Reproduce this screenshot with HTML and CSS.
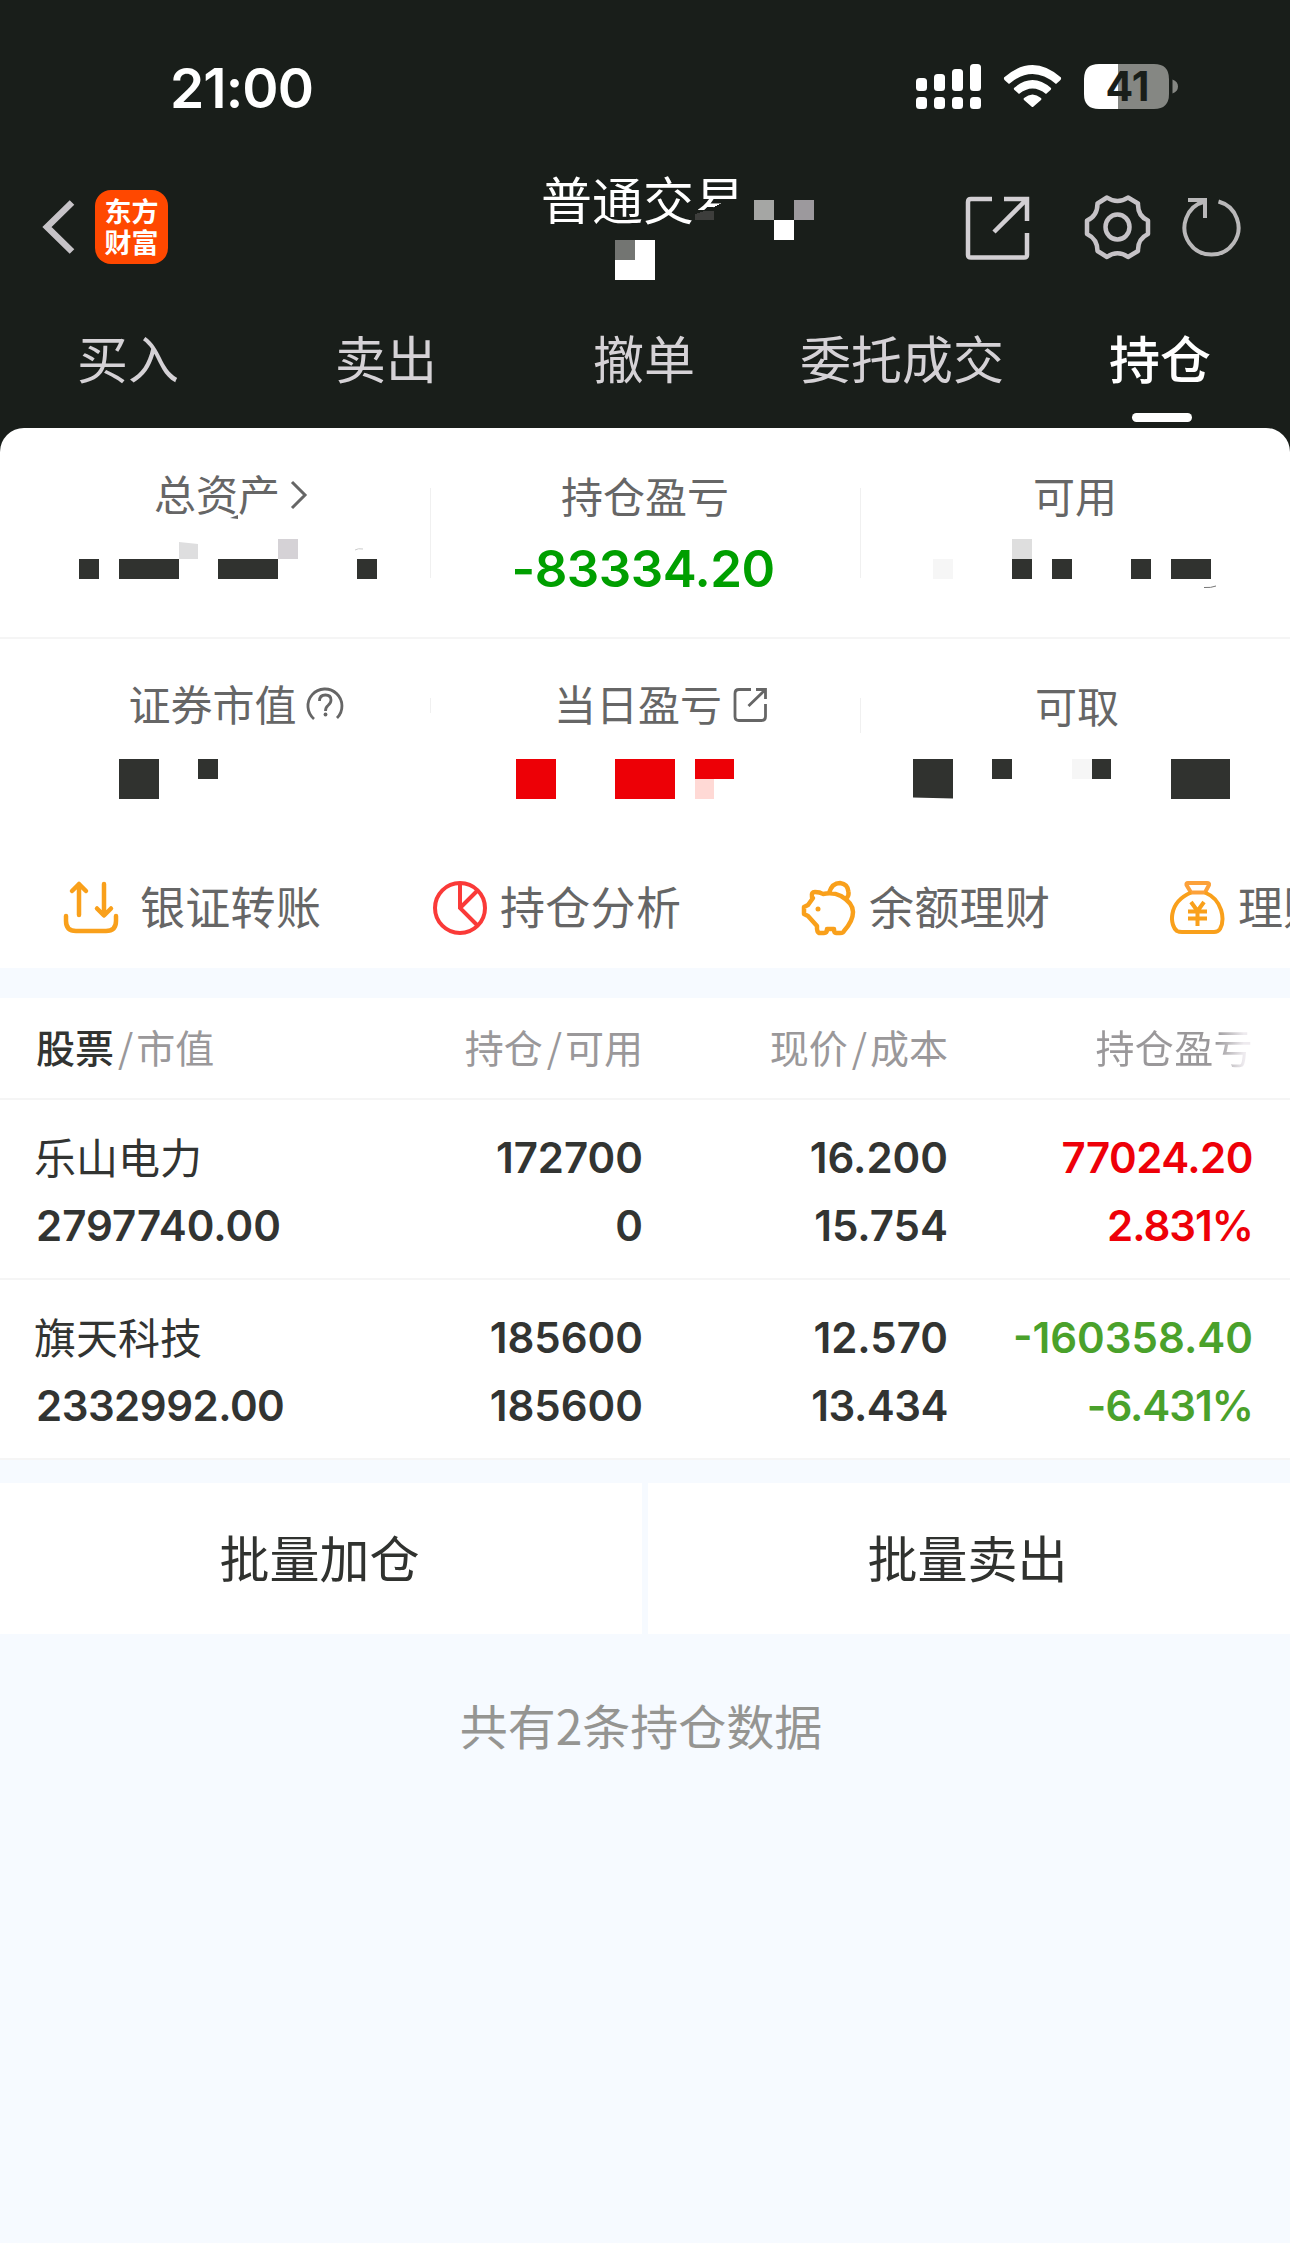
FILE: index.html
```html
<!DOCTYPE html>
<html lang="zh-CN">
<head>
<meta charset="utf-8">
<title>普通交易 - 持仓</title>
<link rel="stylesheet" href="styles.css">
</head>
<body>
<header class="top">
  <div class="status">
    <span class="clock">21:00</span>
    <svg class="status-icons" width="264" height="48" viewBox="915 62 264 48">
      <g fill="#fff">
        <rect x="916" y="78" width="11" height="13" rx="3.5"/><rect x="934" y="74" width="11" height="17" rx="3.5"/><rect x="952" y="69" width="11" height="22" rx="3.5"/><rect x="970" y="64" width="11" height="27" rx="3.5"/>
        <rect x="916" y="97" width="11" height="12" rx="3.5"/><rect x="934" y="97" width="11" height="12" rx="3.5"/><rect x="952" y="97" width="11" height="12" rx="3.5"/><rect x="970" y="97" width="11" height="12" rx="3.5"/>
        <path d="M1004 77.500Q1032.500 52.500 1061 77.500Q1061.500 79 1060 80.500L1056 84Q1032.500 64 1009 84L1005 80.500Q1003.500 79 1004 77.500Z"/>
        <path d="M1014 88Q1032.500 72 1051 88Q1051.500 89 1050.500 90L1046 94Q1032.500 83 1019 94L1014.500 90Q1013.500 89 1014 88Z"/>
        <path d="M1024 98Q1032.500 91 1041 98Q1042 99 1041 100L1033.500 106.500Q1032.500 107.500 1031.500 106.500L1024 100Q1023 99 1024 98Z"/>
      </g>
      <path d="M1118 64H1154Q1169 64 1169 79V94Q1169 109 1154 109H1118Z" fill="#858783"/>
      <path d="M1118 64H1099Q1084 64 1084 79V94Q1084 109 1099 109H1118Z" fill="#fff"/>
      <path d="M1172.500 79.500Q1178 81.500 1178 86.500T1172.500 93.500Z" fill="#858783"/>
      <text x="1127.500" y="101" text-anchor="middle" class="battery">41</text>
    </svg>
  </div>
  <div class="nav">
    <div class="nav-left">
      <svg width="34" height="56" viewBox="0 0 34 56"><path d="M30 3.500L5 28L30 52.500" fill="none" stroke="#c6c3c7" stroke-width="6.500" stroke-linecap="butt"/></svg>
      <div class="logo"><span>东方</span><span>财富</span></div>
    </div>
    <div class="title">
      <h1>普通交易</h1>
      <svg class="title-mask" width="300" height="110" viewBox="540 175 300 110" shape-rendering="crispEdges">
        <path d="M694 209L711 211L714 207L722 203L729 200H745V240H694Z" fill="#191e1a"/>
        <path d="M695 214L704 211H714V220H695Z" fill="#3d3e3c"/>
        <path d="M754 200h20v20h-20z" fill="#a5a6a4"/><path d="M794 200h20v20h-20z" fill="#9c999d"/>
        <path d="M774 220h20v20h-20zM635 240h20v40h-40v-20h20z" fill="#fff"/><path d="M615 240h20v20h-20z" fill="#737572"/>
      </svg>
    </div>
    <svg class="nav-icons" width="280" height="72" viewBox="964 191 280 72" fill="none">
      <g stroke="#d2cfd3" stroke-width="4.500"><path d="M992 199H971Q968 199 968 202V255Q968 257.500 971 257.500H1024Q1027 257.500 1027 255V233"/><path d="M1004 199H1027V221M1027 199L994 232"/></g>
      <g stroke="#c6c3c7" stroke-width="4.500" stroke-linejoin="round"><path d="M1107 197.500Q1117.500 204.500 1128 197.500L1138 203.500Q1137.500 216 1148 220.500V234Q1137.500 239 1138 251L1128 257Q1117.500 249.500 1107 257L1097.500 251Q1097.500 239 1087 234V220.500Q1097.500 216 1097.500 203.500Z"/><ellipse cx="1117.500" cy="227" rx="12" ry="12.500"/></g>
      <path d="M1188 200H1205V218M1218.500 201.500A27 27 0 1 1 1204.500 201.500" stroke="#b9b8b9" stroke-width="4"/>
    </svg>
  </div>
  <nav class="tabs">
    <a>买入</a><a>卖出</a><a>撤单</a><a>委托成交</a><a class="active">持仓</a>
  </nav>
</header>
<main>
  <section class="summary">
    <div class="cell raised">
      <div class="label link-label"><span>总资产</span><svg class="chev" width="20" height="34" viewBox="0 0 20 34"><path d="M3 4L16 17L3 30" fill="none" stroke="#666" stroke-width="3"/></svg></div>
      <svg class="mosaic" width="430" height="80" viewBox="0 515 430 80">
        <path d="M79 559h20v20H79zM119 559h60v20h-60zM218 559h60v20h-60zM357 559h20v20h-20z" fill="#30322f"/>
        <path d="M179 542L198 544V559H179z" fill="#dededf"/><path d="M278 539h20v20h-20z" fill="#d5d2d6"/>
        <path d="M230 518L238 515V519z" fill="#666"/><path d="M355 550Q358 548 363 549" stroke="#ccc" fill="none"/>
      </svg>
    </div>
    <div class="cell">
      <i class="rule"></i>
      <div class="label">持仓盈亏</div>
      <div class="value green">-83334.20</div>
    </div>
    <div class="cell">
      <i class="rule"></i>
      <div class="label">可用</div>
      <svg class="mosaic" width="430" height="80" viewBox="860 515 430 80">
        <path d="M1012 559h20v20h-20zM1052 559h20v20h-20zM1131 559h20v20h-20zM1171 559h40v20h-40z" fill="#30322f"/>
        <path d="M933 559h20v20h-20z" fill="#f6f6f6"/><path d="M1012 539h20v20h-20z" fill="#dedede"/>
        <path d="M1204 587.500Q1211 588 1216 586" stroke="#777" fill="none"/>
      </svg>
    </div>
  </section>
  <section class="summary second">
    <div class="cell raised">
      <div class="label help-label"><span>证券市值</span><svg class="help" width="38" height="38" viewBox="307 686 38 38" fill="none"><path d="M315 719A17 17 0 1 1 338 718" stroke="#666" stroke-width="2.800"/><path d="M320.500 701Q320.500 695 326.500 695Q332 695 332 700Q332 703 329 705.500Q326.500 707.500 326.500 711" stroke="#666" stroke-width="2.800"/><circle cx="326.500" cy="714.500" r="1.900" fill="#666"/></svg></div>
      <svg class="mosaic" width="430" height="80" viewBox="0 724 430 80"><path d="M119 759h40v40h-40zM198 759h20v20h-20z" fill="#30322f"/></svg>
    </div>
    <div class="cell raised">
      <i class="rule short"></i>
      <div class="label link-label"><span>当日盈亏</span><svg class="ext" width="38" height="38" viewBox="731 686 38 38" fill="none" stroke="#666" stroke-width="2.800"><path d="M751 689.500H739Q735 689.500 735 693.500V716.500Q735 720.500 739 720.500H761.500Q765.500 720.500 765.500 716.500V704M756 689.500H765.500V699M765.500 689.500L748.500 706"/></svg></div>
      <svg class="mosaic" width="430" height="80" viewBox="430 724 430 80"><path d="M516 759h40v40h-40zM615 759h60v40h-60zM695 759h39v20h-39z" fill="#ed0006"/><path d="M695 779h19v20h-19z" fill="#ffd9d5"/></svg>
    </div>
    <div class="cell">
      <i class="rule medium"></i>
      <div class="label cash-label">可取</div>
      <svg class="mosaic" width="430" height="80" viewBox="860 724 430 80"><path d="M913 759h40v39.500l-40-1zM992 759h20v20h-20zM1092 759h19v20h-19zM1171 759h59v40h-59z" fill="#30322f"/><path d="M1072 759h20v20h-20z" fill="#f6f6f6"/></svg>
    </div>
  </section>
  <section class="shortcuts">
    <a class="wide"><svg width="56" height="58" viewBox="63 880 56 58" fill="none" stroke="#f9a01b" stroke-width="4.500" stroke-linecap="round" stroke-linejoin="round"><path d="M79 915V884M72 891L79 884L86 891M104 884V915M97 908.500L104 915.500L111 908.500M66 916V921Q66 931 76 931H106Q116 931 116 921V916"/></svg><span>银证转账</span></a>
    <a><svg width="56" height="58" viewBox="432 880 56 58" fill="none" stroke="#fa3a38" stroke-width="4"><circle cx="460" cy="908" r="25"/><path d="M460 883V908L478 926M460 908L478 890"/></svg><span>持仓分析</span></a>
    <a><svg width="56" height="58" viewBox="801 880 56 58" fill="none" stroke="#f9a01b" stroke-width="4.500" stroke-linejoin="round"><path d="M829 893Q832 883 840 883Q848 884 848.500 892Q849 896 846.500 898M812 897Q811 892 815 892Q820 892 823 894Q833 892 841 896Q853 903 853 912Q853 921 844 931Q843.500 933 840 933H836Q834 933 834 929H827Q827 933 824 933H820Q816.500 933 817 926L808 916L804 914V907L808 905L813 898Z"/><circle cx="818" cy="909" r="2.500" fill="#f9a01b" stroke="none"/></svg><span>余额理财</span></a>
    <a><svg width="56" height="58" viewBox="1169 880 56 58" fill="none" stroke="#f9a01b" stroke-width="4" stroke-linejoin="round"><path d="M1190 892.500L1185.500 885Q1185 883 1187 883H1206Q1208.500 883 1208 885L1204 892.500Z" stroke="#fca13a"/><path d="M1190 892.500C1166 903 1169 926 1176 931Q1178 932 1181 932H1213Q1217 932 1219 929C1224 920 1222 900 1204 892.500"/><path d="M1190 902L1196.500 911L1203 902M1196.500 911V926M1187 911.500H1206M1187 918.500H1206"/></svg><span>理财</span></a>
  </section>
  <section class="holdings">
    <div class="row head">
      <div><b>股票</b><i>/</i>市值</div><div>持仓<i>/</i>可用</div><div>现价<i>/</i>成本</div><div class="fade">持仓盈亏</div>
    </div>
    <div class="row">
      <div><span class="name">乐山电力</span><span>2797740.00</span></div>
      <div><span>172700</span><span>0</span></div>
      <div><span>16.200</span><span>15.754</span></div>
      <div class="up"><span class="snug">77024.20</span><span class="tight">2.831%</span></div>
    </div>
    <div class="row">
      <div><span class="name">旗天科技</span><span class="snug">2332992.00</span></div>
      <div><span>185600</span><span>185600</span></div>
      <div><span>12.570</span><span class="snug">13.434</span></div>
      <div class="down"><span>-160358.40</span><span class="tight">-6.431%</span></div>
    </div>
  </section>
  <section class="actions"><button>批量加仓</button><button>批量卖出</button></section>
  <p class="total">共有2条持仓数据</p>
</main>
</body>
</html>
```
FILE: styles.css
```css
* { box-sizing: border-box; }
body {
  margin: 0;
  width: 1290px;
  min-height: 2243px;
  overflow-x: hidden;
  background: #f6faff;
  color: #323432;
  font-family: "Noto Sans CJK SC", sans-serif;
}
svg { display: block; flex: none; }
i { font-style: normal; }

.top { height: 452px; background: #191e1a; color: #d5d2d6; }
.status { height: 166px; padding: 62px 111px 0 170px; display: flex; justify-content: space-between; }
.clock { font: 600 55px/52px Inter, sans-serif; color: #fff; letter-spacing: -0.9px; }
.battery { font: 700 41px Inter, sans-serif; fill: #191e1a; }

.nav { height: 122px; display: grid; grid-template-columns: 1fr 204px 1fr; }
.nav-left { display: flex; align-items: flex-start; gap: 19px; padding: 24px 0 0 42px; }
.nav-left svg { margin-top: 9px; }
.logo { width: 73px; height: 74px; border-radius: 16px; background: #ff4800; color: #fff; font-weight: 700; font-size: 27px; display: flex; flex-direction: column; align-items: center; padding-top: 5px; }
.logo span { line-height: 31px; }
.title { position: relative; }
.title h1 { margin: 2px 0 0 -2px; font-size: 51px; line-height: 60px; font-weight: 400; color: #fff; white-space: nowrap; }
.title-mask { position: absolute; left: -3px; top: 9px; }
.nav-icons { justify-self: end; margin: 25px 46px 0 0; }

.tabs { height: 140px; display: grid; grid-template-columns: repeat(5, 258px); text-align: center; font-size: 51px; }
.tabs a { height: 140px; position: relative; line-height: 139px; left: -1px; }
.tabs .active { color: #fff; font-weight: 500; }
.tabs .active::after { content: ""; position: absolute; left: 101px; bottom: 6px; width: 60px; height: 9px; border-radius: 4.5px; background: #fff; }

main { margin-top: -24px; }
.summary { height: 211px; background: #fff; border-radius: 24px 24px 0 0; border-bottom: 2px solid #f5f5f5; display: grid; grid-template-columns: repeat(3, 430px); }
.summary.second { border: 0; border-radius: 0; }
.cell { position: relative; padding-top: 41px; text-align: center; }
.second .cell { padding-top: 40px; }
.label { height: 52px; display: flex; justify-content: center; align-items: center; font-size: 42px; line-height: 52px; color: #666; }
.label svg { position: relative; top: 2px; }
.raised .label { position: relative; top: -2px; }
.link-label { padding-left: 33px; }
.help-label { padding-left: 42px; }
.cash-label { padding-left: 4px; }
.chev, .help, .ext { margin-left: 9px; }
.mosaic { margin-top: -6px; }
.second .mosaic { margin-top: -7px; }
.value { font: 600 51px/60px Inter, sans-serif; margin-top: 18px; letter-spacing: -0.5px; padding-right: 4px; }
.green { color: #009f00; }
.rule { position: absolute; left: 0; top: 60px; width: 1px; height: 90px; background: #f0f0f0; }
.rule.short { height: 15px; top: 59px; }
.rule.medium { height: 35px; top: 59px; }

.shortcuts { height: 118px; background: #fff; display: flex; overflow: hidden; padding-left: 63px; font-size: 45px; letter-spacing: 0.3px; color: #666; }
.shortcuts a { flex: 0 0 369px; height: 118px; display: flex; gap: 12px; white-space: nowrap; }
.shortcuts svg { margin-top: 30px; }
.shortcuts span { line-height: 112px; }
.shortcuts .wide { gap: 21px; }

.holdings { margin-top: 30px; }
.row { height: 180px; padding: 24px 37px 0 36px; background: #fff; border-bottom: 2px solid #f5f5f5; display: grid; grid-template-columns: 302px 305px 305px 305px; text-align: right; font: 600 42px/68px Inter, sans-serif; }
.row > div { display: flex; flex-direction: column; }
.row > div:first-child { text-align: left; }
.row .name { font: 400 42px/64px "Noto Sans CJK SC", sans-serif; height: 68px; margin-left: -2px; }
.row.head { height: 102px; padding-top: 0; font: 400 39px/97px "Noto Sans CJK SC", sans-serif; color: #9a989a; }
.row.head > div { display: block; }
.row.head b { color: #323432; font-weight: 500; }
.row.head i { margin: 0 3px 0 4px; }
.row.head .fade { letter-spacing: 0.4px; background: linear-gradient(90deg, #9a989a 88%, #eeebef 97%); -webkit-background-clip: text; background-clip: text; color: transparent; }
.snug { letter-spacing: -0.5px; }
.tight { letter-spacing: -1px; }
.up { color: #ee0008; }
.down { color: #4aa12b; }

.actions { margin-top: 23px; height: 151px; display: grid; grid-template-columns: 1fr 1fr; gap: 6px; }
.actions button { border: 0; padding: 0 3px 5px 0; margin: 0; background: #fff; color: #30322f; font: 400 50px "Noto Sans CJK SC", sans-serif; }
.total { margin: 54px 8px 0 0; text-align: center; font-size: 48px; line-height: 72px; color: #959592; }
```
